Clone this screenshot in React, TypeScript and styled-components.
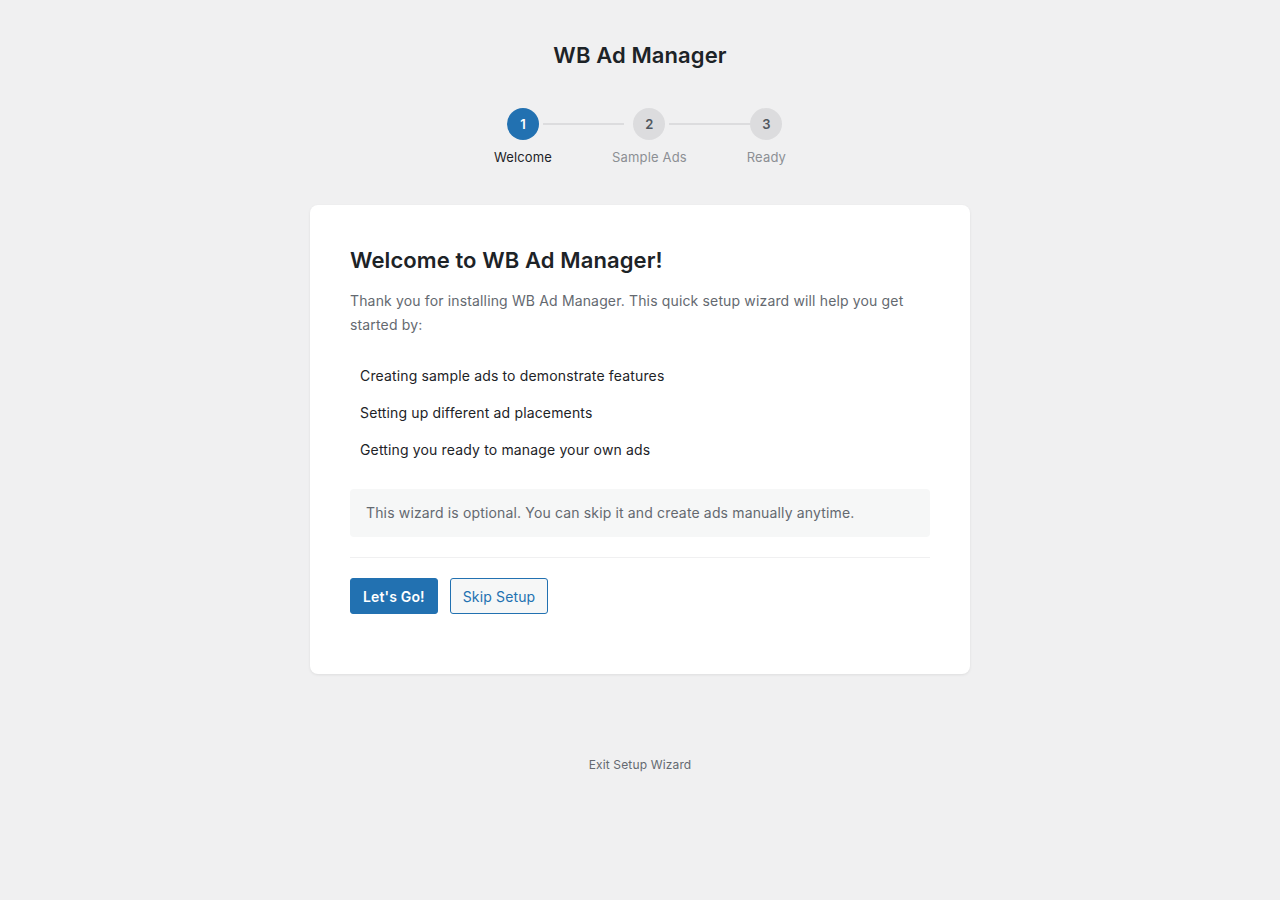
import React from "react";
import styled, { createGlobalStyle } from "styled-components";

const GlobalStyle = createGlobalStyle`
  html, body {
    margin: 0;
    padding: 0;
    background: #f0f0f1;
  }
  body {
    font-family: Inter, "Noto Sans", "Liberation Sans", sans-serif;
    color: #1d2327;
    letter-spacing: 0.15px;
    -webkit-font-smoothing: antialiased;
  }
  * {
    box-sizing: border-box;
  }
`;

const Page = styled.div`
  min-height: 900px;
  display: flex;
  flex-direction: column;
  align-items: center;
  padding-top: 40px;
`;

const Title = styled.h1`
  margin: 0;
  font-size: 22px;
  line-height: 30px;
  font-weight: 600;
  color: #1d2327;
  letter-spacing: 0.1px;
`;

const Steps = styled.ol`
  list-style: none;
  margin: 38px 0 0;
  padding: 0;
  display: flex;
  gap: 60px;
`;

const Step = styled.li`
  display: flex;
  flex-direction: column;
  align-items: center;
  gap: 8px;
`;

const StepNumber = styled.span<{ $active?: boolean; $last?: boolean }>`
  position: relative;
  width: 32px;
  height: 32px;
  border-radius: 50%;
  display: flex;
  align-items: center;
  justify-content: center;
  font-size: 13px;
  font-weight: 600;
  background: ${({ $active }) => ($active ? "#2271b1" : "#dcdcde")};
  color: ${({ $active }) => ($active ? "#ffffff" : "#50575e")};

  &::after {
    content: "";
    display: ${({ $last }) => ($last ? "none" : "block")};
    position: absolute;
    top: 15px;
    left: calc(100% + 4px);
    width: 81px;
    height: 2px;
    background: #dcdcde;
  }
`;

const StepLabel = styled.span<{ $active?: boolean }>`
  font-size: 13px;
  line-height: 18px;
  color: ${({ $active }) => ($active ? "#1d2327" : "#8c8f94")};
`;

const Card = styled.main`
  margin-top: 39px;
  width: 660px;
  background: #ffffff;
  border-radius: 8px;
  box-shadow: 0 1px 3px rgba(0, 0, 0, 0.08);
  padding: 40px 40px 60px;
`;

const Heading = styled.h2`
  margin: 0;
  font-size: 22px;
  line-height: 30px;
  font-weight: 600;
  color: #1d2327;
  letter-spacing: 0.1px;
`;

const Intro = styled.p`
  margin: 14px 0 0;
  font-size: 14px;
  line-height: 24px;
  color: #646970;
`;

const Features = styled.ul`
  list-style: none;
  margin: 28px 0 0;
  padding: 0 0 0 10px;
  display: flex;
  flex-direction: column;
  gap: 15px;
`;

const Feature = styled.li`
  font-size: 14px;
  line-height: 22px;
  color: #1d2327;
`;

const Notice = styled.div`
  margin-top: 28px;
  background: #f6f7f7;
  border-radius: 4px;
  padding: 13px 16px;
  font-size: 14px;
  line-height: 22px;
  color: #646970;
`;

const Actions = styled.div`
  margin-top: 20px;
  padding-top: 20px;
  border-top: 1px solid #f0f0f1;
  display: flex;
  gap: 12px;
`;

const Button = styled.button<{ $primary?: boolean }>`
  all: unset;
  box-sizing: border-box;
  height: 36px;
  padding: 0 12px;
  display: inline-flex;
  align-items: center;
  border-radius: 3px;
  font-family: inherit;
  font-size: 14px;
  letter-spacing: 0.15px;
  cursor: pointer;
  font-weight: ${({ $primary }) => ($primary ? 600 : 400)};
  background: ${({ $primary }) => ($primary ? "#2271b1" : "#f6f7f7")};
  color: ${({ $primary }) => ($primary ? "#ffffff" : "#2271b1")};
  border: 1px solid #2271b1;
  &:hover {
    filter: brightness(0.95);
  }
`;

const ExitLink = styled.a`
  margin-top: 82px;
  font-size: 12px;
  line-height: 18px;
  color: #646970;
  text-decoration: none;
  cursor: pointer;
`;

const steps = ["Welcome", "Sample Ads", "Ready"];

const features = [
  "Creating sample ads to demonstrate features",
  "Setting up different ad placements",
  "Getting you ready to manage your own ads",
];

export default function App() {
  return (
    <>
      <GlobalStyle />
      <Page>
        <Title>WB Ad Manager</Title>
        <Steps>
          {steps.map((label, i) => (
            <Step key={label}>
              <StepNumber $active={i === 0} $last={i === steps.length - 1}>
                {i + 1}
              </StepNumber>
              <StepLabel $active={i === 0}>{label}</StepLabel>
            </Step>
          ))}
        </Steps>
        <Card>
          <Heading>Welcome to WB Ad Manager!</Heading>
          <Intro>
            Thank you for installing WB Ad Manager. This quick setup wizard will help you get
            started by:
          </Intro>
          <Features>
            {features.map((f) => (
              <Feature key={f}>{f}</Feature>
            ))}
          </Features>
          <Notice>This wizard is optional. You can skip it and create ads manually anytime.</Notice>
          <Actions>
            <Button $primary>Let's Go!</Button>
            <Button>Skip Setup</Button>
          </Actions>
        </Card>
        <ExitLink>Exit Setup Wizard</ExitLink>
      </Page>
    </>
  );
}
